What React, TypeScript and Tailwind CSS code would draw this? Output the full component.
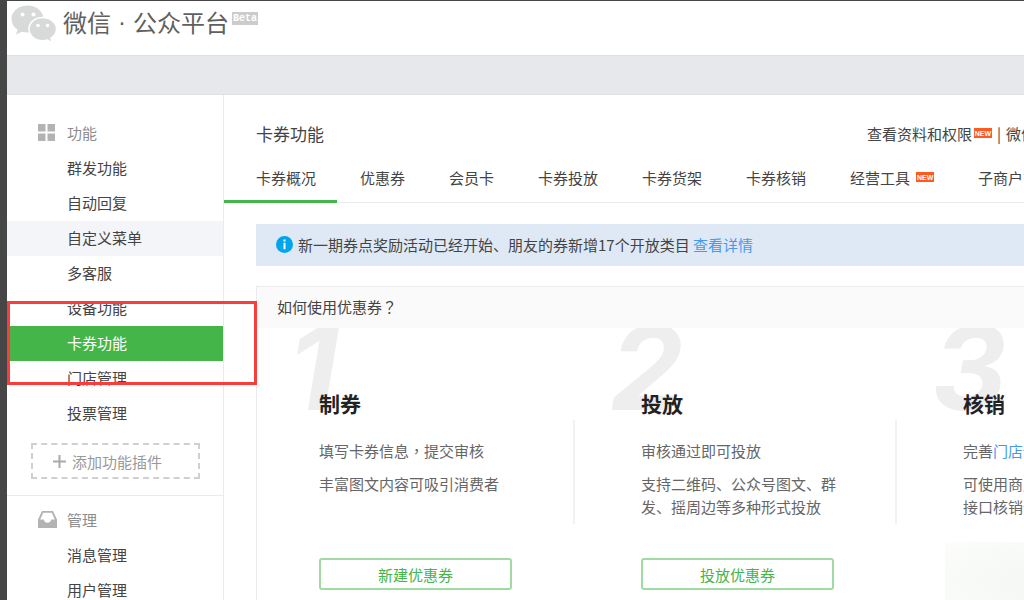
import React from 'react'

interface NavItem {
  label: string
  state?: 'hover' | 'active'
}

interface Step {
  no: string
  title: string
  lines: React.ReactNode[]
  action?: string
}

const featureItems: NavItem[] = [
  { label: '群发功能' },
  { label: '自动回复' },
  { label: '自定义菜单', state: 'hover' },
  { label: '多客服' },
  { label: '设备功能' },
  { label: '卡券功能', state: 'active' },
  { label: '门店管理' },
  { label: '投票管理' },
]

const manageItems: NavItem[] = [{ label: '消息管理' }, { label: '用户管理' }]

const tabs = [
  { label: '卡券概况', active: true },
  { label: '优惠券' },
  { label: '会员卡' },
  { label: '卡券投放' },
  { label: '卡券货架' },
  { label: '卡券核销' },
  { label: '经营工具', isNew: true },
  { label: '子商户管理' },
]

// 居中的全角标点
const Punct = ({ children }: { children: string }) => (
  <span className="font-['Noto_Sans_CJK_TC',sans-serif]">{children}</span>
)

const steps: Step[] = [
  {
    no: '1',
    title: '制券',
    lines: [
      <>
        填写卡券信息<Punct>，</Punct>提交审核
      </>,
      '丰富图文内容可吸引消费者',
    ],
    action: '新建优惠券',
  },
  {
    no: '2',
    title: '投放',
    lines: ['审核通过即可投放', '支持二维码、公众号图文、群发、摇周边等多种形式投放'],
    action: '投放优惠券',
  },
  {
    no: '3',
    title: '核销',
    lines: [
      <>
        完善<a href="#" className="text-[#459ae9]">门店</a>信息
      </>,
      <>
        可使用商户后台或
        <br />
        接口核销卡券
      </>,
    ],
  },
]

const WechatLogo = () => (
  <svg width="46" height="38" viewBox="0 0 46 38" className="shrink-0" aria-hidden="true">
    <path
      d="M16.5 0.5C7.5 0.5 0.5 6.5 0.5 14C0.5 18.3 2.8 22 6.5 24.6L5 29.5L10.8 26.7C12.6 27.2 14.5 27.5 16.5 27.5C25.5 27.5 32.5 21.5 32.5 14C32.5 6.5 25.5 0.5 16.5 0.5Z"
      fill="#d8dada"
    />
    <path
      d="M31.5 12.5C23.8 12.5 18 17.7 18 24C18 30.4 23.8 35.6 31.5 35.6C33.2 35.6 34.8 35.4 36.2 34.9L41.3 37.5L40 33.2C43.2 31 45.5 27.8 45.5 24C45.5 17.7 39.2 12.5 31.5 12.5Z"
      fill="#d8dada"
      stroke="#fff"
      strokeWidth="1.4"
    />
    <circle cx="11.5" cy="9.5" r="2" fill="#fff" />
    <circle cx="22.5" cy="9.5" r="2" fill="#fff" />
    <circle cx="27" cy="20.5" r="1.8" fill="#fff" />
    <circle cx="36.5" cy="20.5" r="1.8" fill="#fff" />
  </svg>
)

const GridIcon = () => (
  <svg width="17" height="17" viewBox="0 0 17 17" fill="#b3b3b3" aria-hidden="true">
    <path d="M0 0h7.5v7.5H0zM9.5 0H17v7.5H9.5zM0 9.5h7.5V17H0zM9.5 9.5H17V17H9.5z" />
  </svg>
)

const InboxIcon = () => (
  <svg width="19" height="17" viewBox="0 0 19 17" aria-hidden="true">
    <path
      fillRule="evenodd"
      fill="#b3b3b3"
      d="M4 0h11l4 8.5V17H0V8.5zM5.2 1.8L2.2 8.6H5.8C6.3 10.8 7.6 11.7 9.5 11.7C11.4 11.7 12.7 10.8 13.2 8.6H16.8L13.8 1.8z"
    />
  </svg>
)

const InfoIcon = () => (
  <svg width="17" height="17" viewBox="0 0 17 17" className="shrink-0" aria-hidden="true">
    <circle cx="8.5" cy="8.5" r="8.5" fill="#00a5ec" />
    <path d="M7.5 3.5h2v2h-2zM7.5 6.8h2v6.4h-2z" fill="#fff" />
  </svg>
)

const NewBadge = () => (
  <span className="flex h-[10px] w-[18px] shrink-0 items-center justify-center bg-[#ff5a1f] font-['Liberation_Sans',sans-serif] text-[7px] font-bold leading-none text-white">
    NEW
  </span>
)

const NavGroup = ({ title, icon, items }: { title: string; icon: React.ReactNode; items: NavItem[] }) => (
  <div>
    <h2 className="flex h-[35px] items-center pb-[2px] pl-[31px] text-[#8d8d8d]">
      <span className="flex w-[29px]">{icon}</span>
      {title}
    </h2>
    <ul>
      {items.map((item) => (
        <li key={item.label} className="relative">
          <a
            href="#"
            className={`flex h-[35px] items-center pb-[2px] pl-[60px] ${
              item.state === 'active' ? 'bg-[#44b549] text-white' : item.state === 'hover' ? 'bg-[#f4f5f9]' : ''
            }`}
          >
            {item.label}
          </a>
          {/* 红框标注 */}
          {item.state === 'active' && (
            <span className="pointer-events-none absolute -bottom-[24px] -right-[34px] -top-[25px] left-0 z-10 border-3 border-[#fa3c3c]" />
          )}
        </li>
      ))}
    </ul>
  </div>
)

const StepColumn = ({ step, last }: { step: Step; last: boolean }) => (
  <li className="relative w-[322px] shrink-0 overflow-hidden pl-[62px] pt-[59px]">
    <span className="absolute left-[31px] top-0 -mt-[20px] font-['Inter','Liberation_Sans',sans-serif] text-[116px] font-bold italic leading-[120px] text-[#eee]">
      {step.no}
    </span>
    <h4 className="relative text-[21px] font-bold leading-[32px] text-[#222]">{step.title}</h4>
    <div className={`mr-1 mt-px h-[104px] pr-[51px] pt-[19px] ${last ? '' : 'border-r-2 border-[#f2f2f2]'}`}>
      {step.lines.map((line, i) => (
        <p key={i} className="mb-[10px] leading-[23px] text-[#666]">
          {line}
        </p>
      ))}
    </div>
    {step.action ? (
      <button
        type="button"
        className="mb-[30px] mt-[34px] h-[32px] w-[193px] rounded-[3px] border-2 border-[#a0dba3] text-[#44b549]"
      >
        {step.action}
      </button>
    ) : (
      <div className="-ml-[18px] mt-[18px] h-[80px] bg-radial from-[#f1f5f0] to-[#fcfdfc]" />
    )}
  </li>
)

export default function App() {
  return (
    <div className="flex h-screen flex-col overflow-hidden border-l-[7px] border-t border-[#464646] bg-white font-['Noto_Sans_CJK_SC',sans-serif] text-[15px] leading-[23px] text-[#444]">
      <header className="flex h-[54px] shrink-0 items-start pl-1">
        <div className="pt-1">
          <WechatLogo />
        </div>
        <h1 className="ml-[6px] flex pt-[3px] text-[24px] leading-[36px] text-[#606060]">
          <span>微信</span>
          <span className="w-[22px] text-center font-['Liberation_Sans',sans-serif]">·</span>
          <span>公众平台</span>
        </h1>
        <span className="ml-[3px] mt-[11px] flex h-[13px] w-[26px] items-center justify-center bg-[#ccc] font-['Liberation_Mono',monospace] text-[10px] font-bold leading-none text-white">
          Beta
        </span>
      </header>
      <div className="h-[40px] shrink-0 border-y border-[#dfe0e3] bg-[#e7e8eb]" />

      <div className="flex min-h-0 flex-1">
        <nav className="relative z-10 w-[217px] shrink-0 border-r border-[#ebebee] pt-[21px]">
          <NavGroup title="功能" icon={<GridIcon />} items={featureItems} />
          <button
            type="button"
            className="mx-6 mt-[12px] flex h-[36px] w-[169px] items-center justify-center gap-[6px] border-2 border-dashed border-[#d0d0d0] pr-[16px] text-[#999]"
          >
            <svg width="13" height="13" viewBox="0 0 13 13" fill="#aaa" aria-hidden="true">
              <path d="M5.5 0h2v5.5H13v2H7.5V13h-2V7.5H0v-2h5.5z" />
            </svg>
            添加功能插件
          </button>
          <div className="mt-[16px] border-t border-[#ebebee] pt-[7px]">
            <NavGroup title="管理" icon={<InboxIcon />} items={manageItems} />
          </div>
        </nav>

        <main className="min-w-0 flex-1 overflow-hidden">
          <div className="w-full min-w-[998px]">
            <div className="flex items-center justify-between pl-8 pr-[186px] pt-[26px]">
              <h2 className="text-[17px] leading-[26px]">卡券功能</h2>
              <div className="flex items-center pb-[2px]">
                <a href="#">查看资料和权限</a>
                <span className="ml-[2px]">
                  <NewBadge />
                </span>
                <span className="mx-[5px]">|</span>
                <a href="#">微信</a>
              </div>
            </div>

            <div className="mt-[13px] flex h-[43px] gap-[44px] border-b border-[#ebebee] pl-8">
              {tabs.map((tab) => (
                <a
                  key={tab.label}
                  href="#"
                  className={`flex h-[43px] shrink-0 gap-[6px] pt-[6px] ${
                    tab.active ? '-ml-8 -mr-[21px] border-b-3 border-[#44b549] pl-8 pr-[21px]' : ''
                  }`}
                >
                  {tab.label}
                  {tab.isNew && (
                    <span className="mt-[6px]">
                      <NewBadge />
                    </span>
                  )}
                </a>
              ))}
            </div>

            <div className="ml-8 mt-[21px] flex h-[42px] items-center bg-[#dfe9f6] pb-[2px] pl-5">
              <InfoIcon />
              <p className="ml-[5px]">
                新一期券点奖励活动已经开始、朋友的券新增17个开放类目{' '}
                <a href="#" className="text-[#459ae9]">
                  查看详情
                </a>
              </p>
            </div>

            <section className="ml-8 mt-[20px] border border-[#ebebee]">
              <h3 className="h-[41px] bg-[#fafafa] pl-5 leading-[39px]">
                如何使用优惠券<Punct>？</Punct>
              </h3>
              <ol className="flex">
                {steps.map((step, i) => (
                  <StepColumn key={step.no} step={step} last={i === steps.length - 1} />
                ))}
              </ol>
            </section>
          </div>
        </main>
      </div>
    </div>
  )
}
